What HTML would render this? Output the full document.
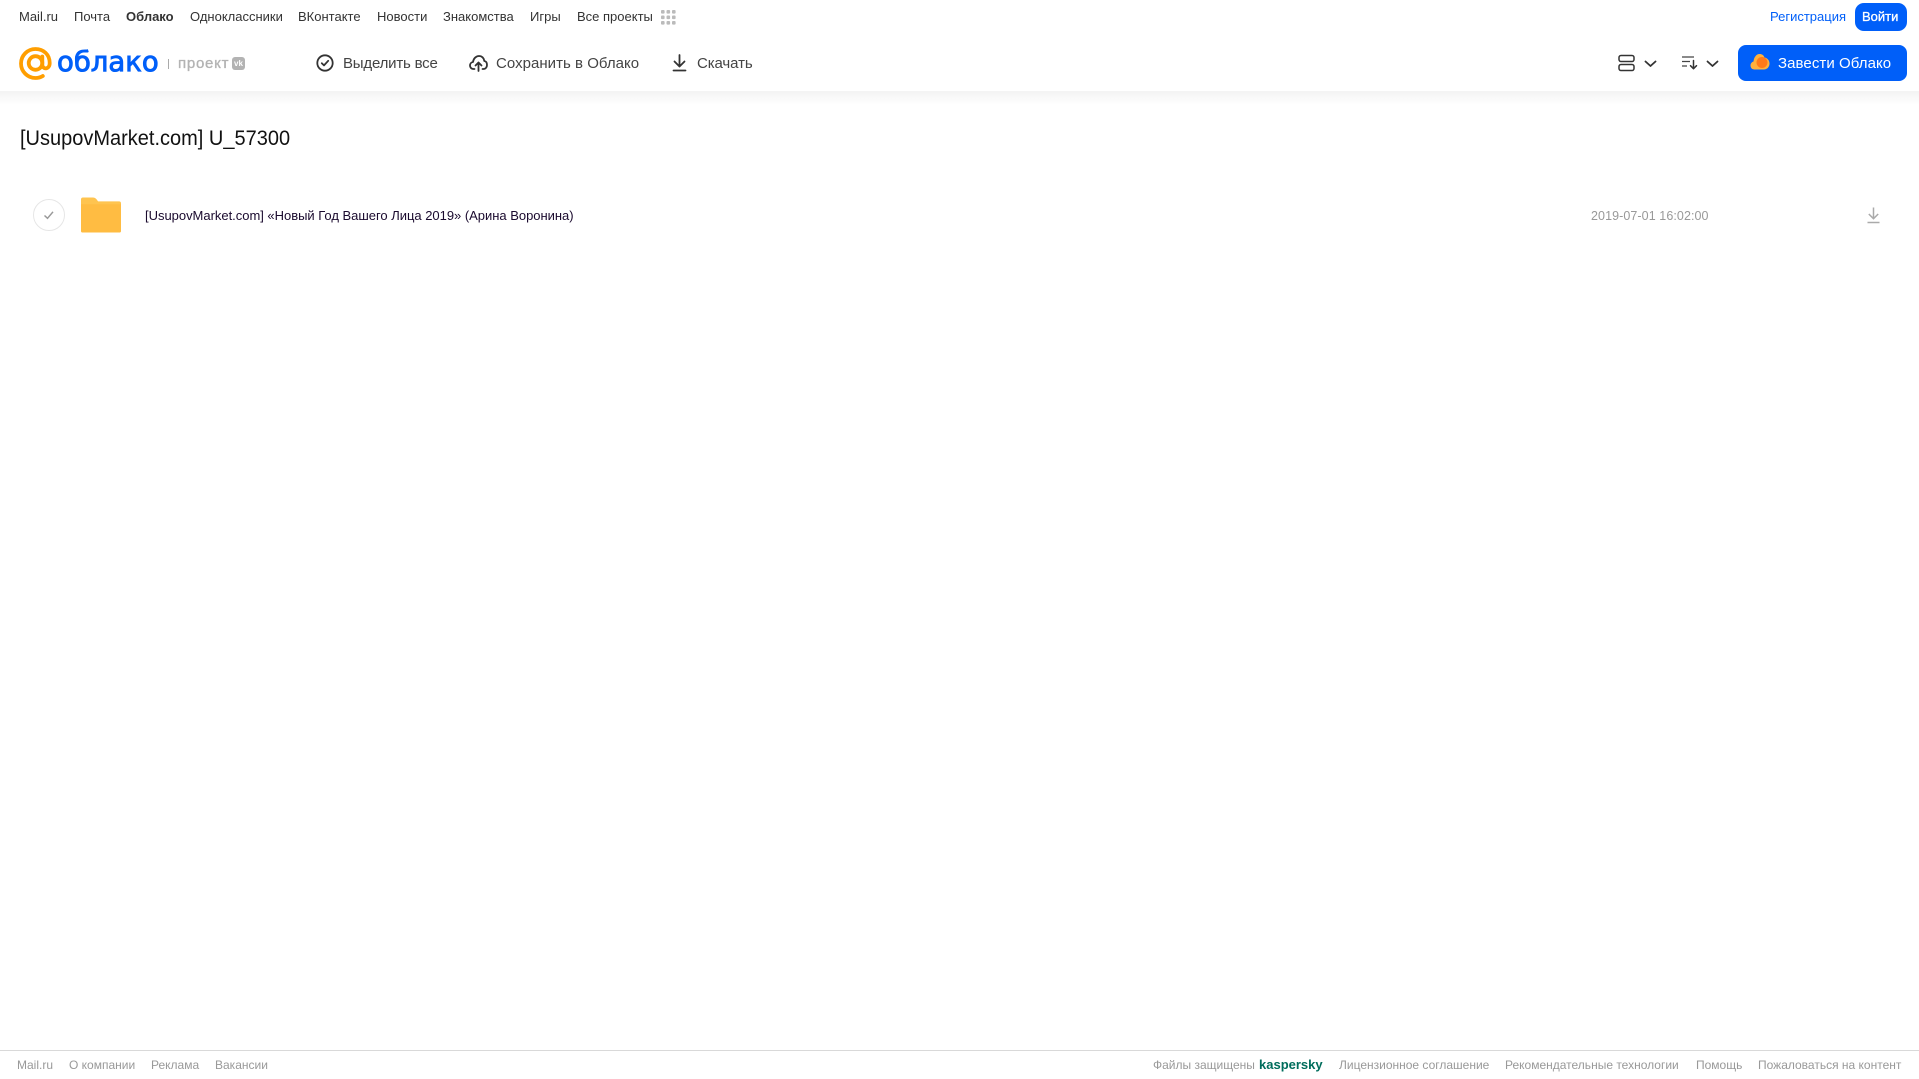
<!DOCTYPE html>
<html lang="ru"><head><meta charset="utf-8"><title>Облако</title>
<style>
html,body{margin:0;padding:0;background:#fff}
body{position:relative;width:1919px;height:1079px;overflow:hidden;font-family:"Liberation Sans",sans-serif}
.t{position:absolute;white-space:nowrap;line-height:20px}
.n{top:7px;font-size:13px;color:#333}
.b{top:53.500px;font-size:15px;color:#444}
.f{top:1055px;font-size:12px;color:#999}
svg{position:absolute;overflow:visible}
.s{fill:none;stroke:#333;stroke-width:1.800;stroke-linecap:round;stroke-linejoin:round}
</style></head><body>
<div style="position:absolute;left:0;top:91px;width:1919px;height:14px;background:linear-gradient(#f3f3f3,#fff)"></div>

<span class="t n" style="left:19px">Mail.ru</span>
<span class="t n" style="left:74px">Почта</span>
<span class="t n" style="left:126px;font-weight:bold">Облако</span>
<span class="t n" style="left:190px">Одноклассники</span>
<span class="t n" style="left:298px">ВКонтакте</span>
<span class="t n" style="left:377px">Новости</span>
<span class="t n" style="left:443px">Знакомства</span>
<span class="t n" style="left:530px">Игры</span>
<span class="t n" style="left:577px">Все проекты</span>
<svg style="left:661px;top:10px" width="15" height="15" fill="#bbb"><rect x="0" y="0" width="3.600" height="3.600" rx="1"/><rect x="5.500" y="0" width="3.600" height="3.600" rx="1"/><rect x="11" y="0" width="3.600" height="3.600" rx="1"/><rect x="0" y="5.500" width="3.600" height="3.600" rx="1"/><rect x="5.500" y="5.500" width="3.600" height="3.600" rx="1"/><rect x="11" y="5.500" width="3.600" height="3.600" rx="1"/><rect x="0" y="11" width="3.600" height="3.600" rx="1"/><rect x="5.500" y="11" width="3.600" height="3.600" rx="1"/><rect x="11" y="11" width="3.600" height="3.600" rx="1"/></svg>

<span class="t n" style="left:1770px;color:#005ff9">Регистрация</span>
<div style="position:absolute;left:1855px;top:3px;width:52px;height:28px;border-radius:9px;background:#005ff9"></div>
<span class="t n" style="left:1862px;color:#fff;font-size:13px;-webkit-text-stroke:.3px #fff">Войти</span>

<svg style="left:19px;top:47px" width="33" height="33" viewBox="0 0 33 33" fill="none" stroke="#ff9e00" stroke-width="3.800"><circle cx="16.500" cy="16" r="6.800"/><path d="M23.300 9.500v8c0 5.500 7.400 5.300 7.400-1.500C30.700 7.500 24.500 2 16.500 2 8.500 2 2 8.500 2 16.500S8.500 31 16.500 31c2.800 0 5.200-.7 7.300-2" stroke-linecap="round"/></svg>
<span class="t" style="left:57px;top:46px;line-height:32px;font-family:'DejaVu Sans',sans-serif;font-size:27.500px;color:#005ff9;-webkit-text-stroke:.9px #005ff9">облако</span>
<div style="position:absolute;left:168px;top:59px;width:1px;height:10px;background:#aaa"></div>
<span class="t" style="left:178px;top:53.500px;font-size:15px;color:#b3b3b3;letter-spacing:.75px;-webkit-text-stroke:.35px #b3b3b3">проект</span>
<div style="position:absolute;left:232px;top:57px;width:13px;height:13px;border-radius:3px;background:#b3b3b3;color:#fff;font:bold 8px/13px 'Liberation Sans',sans-serif;text-align:center">vk</div>

<svg style="left:316px;top:54px" width="18" height="18" viewBox="0 0 18 18"><circle class="s" cx="9" cy="9" r="7.700"/><path class="s" d="M5.800 9.200 8 11.400l4.200-4.600"/></svg>
<span class="t b" style="left:343px;letter-spacing:-.2px">Выделить все</span>
<svg style="left:469px;top:54px" width="19" height="18" viewBox="0 0 19 18"><path class="s" d="M5.500 15H4.500C2 15 1 13 1 11.500 1 9.500 2.500 8.200 4 8 4.500 4.500 7 2 10 2c3 0 5 2.200 5.300 5 2 .3 2.700 2.300 2.700 4 0 2-1.300 4-3.500 4h-1"/><path class="s" d="M9.500 17V9M6.500 11.500l3-3 3 3"/></svg>
<span class="t b" style="left:496px;letter-spacing:.03px">Сохранить в Облако</span>
<svg style="left:671.500px;top:54px" width="15" height="18" viewBox="0 0 15 18"><path class="s" d="M7.500 1v11M2.500 7.500l5 5 5-5M1.500 16.500h12"/></svg>
<span class="t b" style="left:697px;letter-spacing:-.1px">Скачать</span>

<svg style="left:1618px;top:54px" width="17" height="18" viewBox="0 0 17 18"><rect class="s" style="stroke-width:1.500" x="1" y="1.500" width="15" height="6" rx="2"/><rect class="s" style="stroke-width:1.500" x="1" y="10.500" width="15" height="6" rx="2"/></svg>
<svg style="left:1643.500px;top:60px" width="13" height="8" viewBox="0 0 13 8"><path class="s" d="M1.500 1.500l5 4.500 5-4.500"/></svg>
<svg style="left:1681px;top:55px" width="17" height="15" viewBox="0 0 17 15"><path d="M1 2h12M1 6.500h8M1 11h5" fill="none" stroke="#444" stroke-width="1.300"/><path class="s" style="stroke-width:1.500" d="M12.500 5.500v8M9.500 10.700l3 3 3-3"/></svg>
<svg style="left:1706px;top:60px" width="13" height="8" viewBox="0 0 13 8"><path class="s" d="M1.500 1.500l5 4.500 5-4.500"/></svg>

<div style="position:absolute;left:1738px;top:45px;width:169px;height:36px;border-radius:8px;background:#005ff9"></div>
<svg style="left:1750px;top:53px" width="20" height="18" viewBox="0 0 20 18"><path fill="#ffb13d" d="M4.500 16.500C2 16.500.5 14.700.5 12.500.5 10.500 1.800 9 3.500 8.500 4 4 6.500 1 9.500 1c2.500 0 4.300 1.300 5 3.500 3 .5 5 3 5 6 0 3.500-2.500 6-5.500 6z"/><circle cx="12" cy="9.500" r="5.500" fill="#ff7a1a"/></svg>
<span class="t" style="left:1778px;top:53.500px;font-size:15px;color:#fff;letter-spacing:.07px">Завести Облако</span>

<span class="t" style="left:20px;top:124.500px;line-height:26px;font-size:21.500px;color:#111;transform:scaleX(.93);transform-origin:0 50%">[UsupovMarket.com] U_57300</span>

<div style="position:absolute;left:33px;top:199px;width:30px;height:30px;border:1px solid #e6e6e6;border-radius:50%"></div>
<svg style="left:43px;top:210px" width="12" height="10" viewBox="0 0 12 10"><path d="M1.500 5.500 4.500 8.300 10 1.800" fill="none" stroke="#999" stroke-width="1.500"/></svg>
<svg style="left:81px;top:197px" width="40" height="36" viewBox="0 0 41 36"><path fill="#ffc44f" d="M2 0h10c2 0 3 .8 4 2l1.500 2H39a2 2 0 0 1 2 2v28a2 2 0 0 1-2 2H2a2 2 0 0 1-2-2V2a2 2 0 0 1 2-2z"/><path fill="#ffbc42" d="M0 7h41v27a2 2 0 0 1-2 2H2a2 2 0 0 1-2-2z"/></svg>
<span class="t" style="left:145px;top:206px;font-size:13px;color:#1a0a2e;letter-spacing:-.02px">[UsupovMarket.com] «Новый Год Вашего Лица 2019» (Арина Воронина)</span>
<span class="t" style="left:1591px;top:206px;font-size:12.500px;color:#999;letter-spacing:.08px">2019-07-01 16:02:00</span>
<svg style="left:1865.500px;top:206px" width="15" height="18" viewBox="0 0 15 18"><path d="M7.500 1.500v11M2.800 8l4.700 4.700L12.200 8M1.500 16.500h12" fill="none" stroke="#aaa" stroke-width="1.500"/></svg>

<div style="position:absolute;left:0;top:1050px;width:1919px;height:1px;background:#d9d9d9"></div>
<span class="t f" style="left:17px">Mail.ru</span>
<span class="t f" style="left:69px">О компании</span>
<span class="t f" style="left:151px">Реклама</span>
<span class="t f" style="left:215px">Вакансии</span>
<span class="t f" style="left:1153px">Файлы защищены</span>
<span class="t f" style="left:1259px;font-size:13px;font-weight:bold;color:#006d5c">kaspersky</span>
<span class="t f" style="left:1339px">Лицензионное соглашение</span>
<span class="t f" style="left:1505px">Рекомендательные технологии</span>
<span class="t f" style="left:1696px">Помощь</span>
<span class="t f" style="left:1758px">Пожаловаться на контент</span>
</body></html>
